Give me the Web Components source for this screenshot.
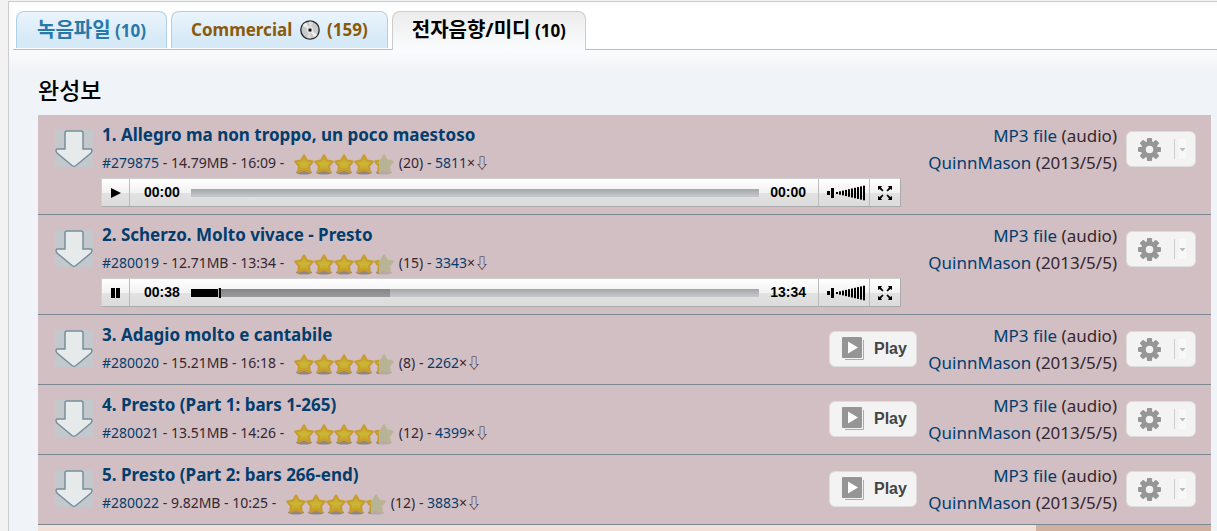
<!DOCTYPE html>
<html lang="ko">
<head>
<meta charset="utf-8">
<title>전자음향/미디</title>
<style>
html, body { height: 100%; margin: 0; }
body { background: #f2f2f2; color: #35262f; font: 17px/27px "Noto Sans", "Noto Sans CJK KR", sans-serif; }
</style>
</head>
<body>
<score-page>
  <tab-bar slot="tabs">
    <tab-item tone="blue"><span lang="ko" style="font-size:20px">녹음파일</span> (10)</tab-item>
    <tab-item tone="brown">Commercial <disc-icon></disc-icon> (159)</tab-item>
    <tab-item tone="active"><span lang="ko" style="font-size:20px">전자음향/미디</span> (10)</tab-item>
  </tab-bar>
  <track-list heading="완성보">
    <track-row number="#279875" size="14.79MB" time="16:09" votes="20" hits="5811">1. Allegro ma non troppo, un poco maestoso
      <audio-player slot="player" current="00:00" total="00:00" played="0" loaded="0"></audio-player></track-row>
    <track-row number="#280019" size="12.71MB" time="13:34" votes="15" hits="3343">2. Scherzo. Molto vivace - Presto
      <audio-player slot="player" current="00:38" total="13:34" played="5" loaded="35" playing></audio-player></track-row>
    <track-row number="#280020" size="15.21MB" time="16:18" votes="8" hits="2262" playable>3. Adagio molto e cantabile</track-row>
    <track-row number="#280021" size="13.51MB" time="14:26" votes="12" hits="4399" playable>4. Presto (Part 1: bars 1-265)</track-row>
    <track-row number="#280022" size="9.82MB" time="10:25" votes="12" hits="3883" playable>5. Presto (Part 2: bars 266-end)</track-row>
  </track-list>
</score-page>

<script>
function define(name, render) {
  customElements.define(name, class extends HTMLElement {
    connectedCallback() {
      if (this.shadowRoot) return;
      this.attachShadow({ mode: "open" }).innerHTML = render(this);
    }
  });
}
const attr = (el, n) => el.getAttribute(n) || "";

define("score-page", () => `
<style>
:host { display: flex; flex-direction: column; box-sizing: border-box; height: 100vh; overflow: hidden; padding: 1px 0 0 8px; }
.frame { flex: 1; display: flex; flex-direction: column; min-height: 0; border: solid #ccc; border-width: 1px 0 0 1px;
  background: linear-gradient(#fafbfd 0 48px, #f1f3f6 69px, #f0f4f8 71px); }
</style>
<div class="frame"><slot name="tabs"></slot><slot></slot></div>`);

define("tab-bar", () => `
<style>
:host { display: block; margin: 4px 0 0 4px; background: #fff; border-bottom: 1px solid #b8bcc0; }
nav { display: flex; align-items: flex-start; gap: 4px; padding: 5px 3px 0; height: 38px; }
</style>
<nav><slot></slot></nav>`);

define("tab-item", () => `
<style>
:host { display: block; }
a { display: block; box-sizing: border-box; height: 37px; padding: 0 20px; border: 1px solid #b0d0ea; border-bottom: 0;
  border-radius: 8px 8px 0 0; background: linear-gradient(#eaf4fc, #d6e9f7 80%); color: #2779aa;
  font-size: 17px; font-weight: 700; line-height: 36px; text-decoration: none; white-space: nowrap; }
:host([tone=brown]) a { color: #8a5a0a; padding: 0 19px; }
:host([tone=active]) a { height: 39px; padding: 0 19px; color: #000; border-color: #ccc; background: linear-gradient(#ececec, #f9fafb 90%); }
</style>
<a href="#"><slot></slot></a>`);

define("disc-icon", () => `
<style>:host { display: inline-block; vertical-align: -4px; margin: 0 3px; width: 20px; height: 20px; } svg { display: block; }</style>
<svg width="20" height="20" viewBox="0 0 20 20">
<circle cx="10" cy="10" r="9.2" fill="#c9c9c9" stroke="#222" stroke-width="1.3"/>
<path d="M10 10 2.5 5.5A8.6 8.6 0 0 1 6 2.4zM10 10 17.5 14.5A8.6 8.6 0 0 1 14 17.6z" fill="#eee"/>
<path d="M10 10 9 1.6 13 2zM10 10 7 18l4 .5z" fill="#dedede"/>
<circle cx="10" cy="10" r="3" fill="#bbb" stroke="#eee"/><circle cx="10" cy="10" r="1.5" fill="#111"/></svg>`);

define("track-list", el => `
<style>
:host { flex: 1; display: flex; flex-direction: column; min-height: 0; padding: 23px 6px 0 29px; }
h2 { margin: 0 0 8px; color: #000; font-size: 23px; line-height: 34px; font-weight: 500; }
.next { flex: 1; display: grid; grid-template-columns: 1fr 175px; background: #f2dfd8; }
.next i { grid-column: 2; background: #d0b09e; }
</style>
<h2>${attr(el, "heading")}</h2><slot></slot><div class="next"><i></i></div>`);

const star = (x, fill, edge, shade) => `<g transform="translate(${x})">
<ellipse cx="10" cy="18.500" rx="8" ry="2" fill="${shade}"/>
<path d="M10 1.200 13 6.500 18.800 7.600 15 12 15.900 18 10 15.800 4.100 18 5 12 1.200 7.600 7 6.500z" fill="${fill}" stroke="${edge}" stroke-width="2" stroke-linejoin="round"/></g>`;
define("star-rating", () => `
<style>:host { display: block; width: 100px; height: 21px; white-space: normal; } svg { display: block; }</style>
<svg width="100" height="21" viewBox="0 0 100 21" role="img" aria-label="4.3">
<defs><linearGradient id="g" x2="0" y2="1"><stop stop-color="#cda32b"/><stop offset=".55" stop-color="#c9b735"/><stop offset="1" stop-color="#c99a22"/></linearGradient>
<clipPath id="c"><path d="M0 0h85v21H0z"/></clipPath></defs>
${star(80, "#b7b397", "#bab394", "#b5a9aa")}
<g clip-path="url(#c)">${[0, 20, 40, 60, 80].map(x => star(x, "url(#g)", "#c79b2e", "#8f8583")).join("")}</g></svg>`);

define("track-row", el => `
<style>
:host { display: flex; align-items: flex-start; padding: 7px 15px 6px 17px; background: #d2bfc3; border-bottom: 1px solid #7c8892; }
.get { margin: 8px 9px 0 0; width: 38px; height: 37px; background: #c2c8cc; }
svg { display: block; }
.main { flex: 1; min-width: 0; }
a { color: #023d6e; text-decoration: none; }
.title { display: block; font-size: 17px; font-weight: 700; line-height: 26px; }
.meta { display: flex; align-items: center; font-size: 14px; line-height: 30px; white-space: pre; }
star-rating { margin: 2px 5px 0 6px; }
.play { display: flex; align-items: center; box-sizing: border-box; margin: 9px 10px 0 0; width: 88px; height: 36px; padding: 0 0 0 12px; gap: 9px;
  border: 1px solid #ddd; border-radius: 6px; background: #f3f3f3; color: #444; font: bold 16px "Liberation Sans", sans-serif; }
.info { min-width: 190px; text-align: right; margin-right: 9px; white-space: nowrap; }
gear-menu { margin-top: 9px; }
</style>
<a class="get" href="#" aria-label="Download"><svg width="38" height="37" viewBox="0 0 38 37">
<path d="M12 1h14q2 0 2 2v16h8q2 1 0 4L21 35.5q-2 1.500-4 0L2 23q-2-3 0-4h8V3q0-2 2-2z" fill="#e6eaeb" stroke="#788f9b" stroke-width="1.500"/></svg></a>
<div class="main">
  <a class="title" href="#"><slot></slot></a>
  <div class="meta"><a href="#">${attr(el, "number")}</a> - ${attr(el, "size")} - ${attr(el, "time")} - <star-rating></star-rating>(${attr(el, "votes")}) - <a href="#">${attr(el, "hits")}</a>×⇩</div>
  <slot name="player"></slot>
</div>
${el.hasAttribute("playable") ? `<button class="play" type="button"><svg width="23" height="24" viewBox="0 0 23 24">
<path d="M3 22.500h18.500V3" fill="none" stroke="#aaa"/><rect width="20" height="21" rx="1" fill="#959595"/><path d="M6 4.500 16 10.500 6 16.500z" fill="#fff"/></svg>Play</button>` : ""}
<div class="info"><a href="#">MP3 file</a> (audio)<br><a href="#">QuinnMason</a> (2013/5/5)</div>
<gear-menu></gear-menu>`);

define("gear-menu", () => `
<style>
:host { display: block; }
button { display: flex; align-items: center; box-sizing: border-box; width: 70px; height: 36px; padding: 0 0 0 11px; border: 1px solid #ddd; border-radius: 6px; background: #f3f3f3; }
.gear { margin-right: 13px; }
.caret { border-left: 1px solid #ccc; height: 20px; display: flex; align-items: center; padding-left: 4px; }
</style>
<button type="button" aria-label="Options"><svg class="gear" width="23" height="23" viewBox="0 0 22 22">
<g fill="#969696"><circle cx="11" cy="11" r="8.200"/>${[0, 45, 90, 135].map(a => `<rect x="8.500" width="5" height="22" rx="1" transform="rotate(${a} 11 11)"/>`).join("")}</g>
<circle cx="11" cy="11" r="3.600" fill="#f3f3f3"/></svg>
<span class="caret"><svg width="7" height="20"><path d="M0 0h7v20H0z" fill="#f8f8f8"/><path d="M.5 9h6l-3 3.500z" fill="#bbb"/></svg></span></button>`);

define("audio-player", el => `
<style>
:host { display: flex; align-items: stretch; box-sizing: border-box; height: 29px; max-width: 800px; margin: 0 0 1px -1px;
  border: 1px solid #d0d0d0; border-right-color: #aaa; border-bottom-color: #aaa;
  background: linear-gradient(#fff, #f2f2f2 50%, #e2e2e2 51%, #dcdcdc); color: #000; font: bold 14px/27px "Liberation Sans", sans-serif; }
button { display: flex; align-items: center; justify-content: center; box-sizing: border-box; padding: 0; border: 0; border-left: 1px solid #bbb; background: none; width: 31px; }
.toggle { width: 28px; border-left: 0; border-right: 1px solid #bbb; }
.vol { width: 51px; padding-left: 4px; }
.now { padding: 0 11px 0 14px; } .all { padding: 0 12px 0 11px; }
.track { flex: 1; align-self: center; position: relative; height: 8px; background: linear-gradient(#a5a6aa, #c8c9cc); }
.loaded, .played { position: absolute; inset: 0 auto 0 0; }
.loaded { background: linear-gradient(#858588, #9c9c9e); }
.played { background: #000; }
.played::after { content: ""; position: absolute; left: 100%; top: -1px; bottom: -1px; border-left: 2px solid #000; box-shadow: -1px 0 #bbb; }
.played.zero { display: none; }
</style>
<button class="toggle" type="button" aria-label="Play or pause"><svg width="12" height="10">${el.hasAttribute("playing")
  ? `<path d="M1 0h4v10H1zM6 0h4v10H6z"/>` : `<path d="M1 0 11 5 1 10z"/>`}</svg></button>
<span class="now">${attr(el, "current")}</span>
<div class="track"><div class="loaded" style="width:${attr(el, "loaded")}%"></div><div class="played${attr(el, "played") === "0" ? " zero" : ""}" style="width:${attr(el, "played")}%"></div></div>
<span class="all">${attr(el, "total")}</span>
<button class="vol" type="button" aria-label="Volume"><svg width="39" height="16" viewBox="0 0 39 16">
<path d="M0 6h3v4H0zM4 3h3v10H4z"/>${Array.from({ length: 10 }, (_, i) => { const h = 2 + i * 1.4; return `<rect x="${9 + i * 3}" y="${8 - h / 2}" width="2" height="${h}"/>`; }).join("")}</svg></button>
<button type="button" aria-label="Fullscreen"><svg width="14" height="14" viewBox="0 0 14 14">
<path d="M0 0h4L3 1.500 5.500 4.500 4.500 5.500 1.500 3 0 4zM14 0v4L12.500 3 9.500 5.500 8.500 4.500 11 1.500 10 0zM0 14v-4l1.500 1L4.500 8.500l1 1L3 12.500 4 14zM14 14h-4l1-1.500-2.500-3 1-1 3 2.500 1.500-1z"/></svg></button>`);
</script>
</body>
</html>
